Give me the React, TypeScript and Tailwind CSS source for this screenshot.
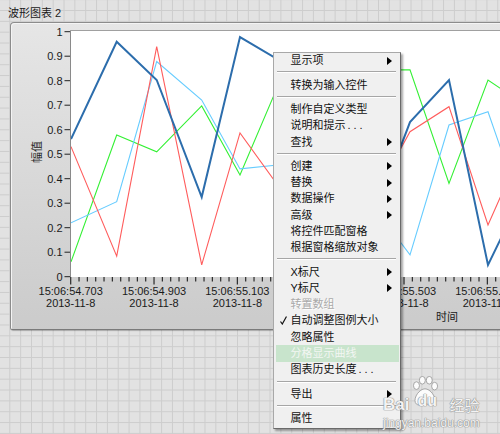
// LabVIEW 波形图表 + 右键菜单 (静态还原)
const FONT = "font-['Liberation_Sans','Noto_Sans_CJK_SC',sans-serif]";
const SVG_FONT = "'Liberation Sans','Noto Sans CJK SC',sans-serif";

// 数据点的横坐标(时间戳间隔不均)
const XS = [71, 116.7, 156.7, 201.7, 240, 282.5, 325, 367.5, 410, 449, 488, 530];
const y = (v: number) => 276.7 - v * 245;

const SERIES: { color: string; width: number; values: number[] }[] = [
  { color: "#33f033", width: 1.1, values: [0.061, 0.578, 0.51, 0.697, 0.415, 0.823, 0.9, 0.844, 0.844, 0.381, 0.803, 0.686] },
  { color: "#66ccff", width: 1.1, values: [0.22, 0.306, 0.878, 0.721, 0.44, 0.458, 0.3, 0.319, 0.089, 0.619, 0.673, 0.18] },
  { color: "#ff5c5c", width: 1.1, values: [0.531, 0.084, 0.939, 0.048, 0.587, 0.346, 0.6, 0.274, 0.592, 0.694, 0.211, 0.597] },
  { color: "#2c6dac", width: 2, values: [0.562, 0.959, 0.803, 0.325, 0.978, 0.876, 0.5, 0.174, 0.631, 0.803, 0.048, 0.4] },
];

// 55.303 那一格被菜单完全挡住,不画
const TIMES: [number, string][] = [
  [0, "15:06:54.703"],
  [1, "15:06:54.903"],
  [2, "15:06:55.103"],
  [4, "15:06:55.503"],
  [5, "15:06:55.703"],
];

type Item = { label: string; arrow?: boolean; disabled?: boolean; checked?: boolean; hover?: boolean; dots?: boolean } | null;

const MENU: Item[] = [
  { label: "显示项", arrow: true },
  null,
  { label: "转换为输入控件" },
  null,
  { label: "制作自定义类型" },
  { label: "说明和提示", dots: true },
  { label: "查找", arrow: true },
  null,
  { label: "创建", arrow: true },
  { label: "替换", arrow: true },
  { label: "数据操作", arrow: true },
  { label: "高级", arrow: true },
  { label: "将控件匹配窗格" },
  { label: "根据窗格缩放对象" },
  null,
  { label: "X标尺", arrow: true },
  { label: "Y标尺", arrow: true },
  { label: "转置数组", disabled: true },
  { label: "自动调整图例大小", checked: true },
  { label: "忽略属性" },
  { label: "分格显示曲线", hover: true },
  { label: "图表历史长度", dots: true },
  null,
  { label: "导出", arrow: true },
  null,
  { label: "属性" },
];

function Chart() {
  const ticks = Array.from({ length: 61 }, (_, i) => i);
  const yTicks = Array.from({ length: 11 }, (_, i) => i);
  return (
    <svg width={498} height={306} viewBox="11 23 498 306" className="block" fontFamily={SVG_FONT}>
      <defs>
        <clipPath id="plot">
          <rect x={71} y={31} width={440} height={246} />
        </clipPath>
      </defs>
      <rect x={70} y={30} width={441} height={247} fill="#fff" />
      <line x1={70.5} y1={30} x2={70.5} y2={277} stroke="#8a8a8a" />
      <line x1={70} y1={30.5} x2={511} y2={30.5} stroke="#a0a0a0" />

      {yTicks.map((i) => {
        const v = i / 10;
        return (
          <g key={i}>
            <line x1={64.5} y1={y(v)} x2={70} y2={y(v)} stroke="#222" />
            <text x={62.5} y={y(v)} textAnchor="end" dominantBaseline="central" fontSize="11" fill="#1a1a1a">
              {i === 10 ? "1" : i === 0 ? "0" : `0.${i}`}
            </text>
          </g>
        );
      })}

      {ticks.map((i) => {
        const x = 70.7 + i * 8.333;
        return <line key={i} x1={x} y1={277} x2={x} y2={i % 10 === 0 ? 284.5 : 281.5} stroke="#2a2a2a" strokeWidth="1.2" />;
      })}

      {TIMES.map(([k, t]) => {
        const x = 70.7 + k * 83.33;
        return (
          <g key={t} fontSize="11" fill="#1a1a1a" textAnchor="middle">
            <text x={x} y={290.5} dominantBaseline="central">{t}</text>
            <text x={x} y={302.5} dominantBaseline="central">2013-11-8</text>
          </g>
        );
      })}

      <text x={447} y={317} textAnchor="middle" dominantBaseline="central" fontSize="11" fill="#1a1a1a">时间</text>
      <text x={37} y={152} textAnchor="middle" dominantBaseline="central" fontSize="11" fill="#1a1a1a" transform="rotate(-90 37 152)">
        幅值
      </text>

      <g clipPath="url(#plot)">
        {SERIES.map((s) => (
          <polyline
            key={s.color}
            points={s.values.map((v, i) => `${XS[i]},${y(v).toFixed(1)}`).join(" ")}
            fill="none"
            stroke={s.color}
            strokeWidth={s.width}
          />
        ))}
      </g>
    </svg>
  );
}

function ContextMenu() {
  return (
    <div className="absolute left-[272.5px] top-[51.7px] w-[128px] border border-[#a8a8a8] border-r-[#6a6a6a] border-b-[#6a6a6a] bg-[#f0f0f0] pl-[2px] pr-[1px] pb-[1px] shadow-[2px_2px_2px_rgba(0,0,0,0.35)]">
      {MENU.map((it, i) =>
        it === null ? (
          <div key={i} className="h-[8px] pt-[2.5px] pl-[1px] pr-[2.5px]">
            <div className="h-px bg-[#a6a6a6]" />
            <div className="h-px bg-white" />
          </div>
        ) : (
          <div
            key={i}
            className={`flex h-[16.3px] items-center text-[11px] leading-none ${
              it.hover ? "bg-[#c8e4cc] text-[#f3f6f3]" : it.disabled ? "text-[#a9a9a9] [text-shadow:1px_1px_0_#fff]" : "text-[#111]"
            }`}
          >
            <div className="w-[15px] shrink-0 pl-[4px]">
              {it.checked && (
                <svg width="7" height="9" viewBox="0 0 7 9" className="block">
                  <path d="M0.5 5.5 L2.3 8 L6.5 0.5" fill="none" stroke="#111" strokeWidth="1.2" />
                </svg>
              )}
            </div>
            <span>
              {it.label}
              {it.dots && <span className="pl-[2px] tracking-[3px]">...</span>}
            </span>
            {it.arrow && (
              <svg width="5" height="8" viewBox="0 0 5 8" className="ml-auto mr-[7px] block">
                <path d="M0 0 L5 4 L0 8 Z" fill="#000" />
              </svg>
            )}
          </div>
        )
      )}
    </div>
  );
}

function Watermark() {
  return (
    <div className="absolute left-[383px] top-[389px] text-white/90 [text-shadow:0_0_1px_#8a8a8a,0_0_1px_#8a8a8a,0_0_1px_#8a8a8a]">
      <div className="flex items-end">
        <span className="text-[17px] font-bold leading-none">Bai</span>
        <div className="relative ml-[5px] w-[30px]">
          <svg width="28" height="32" viewBox="0 0 26 30" className="absolute left-[-3px] top-[-13px]">
            <g fill="#fff" fillOpacity="0.9" stroke="#9a9a9a" strokeWidth="0.8">
              <ellipse cx="5" cy="9" rx="2.8" ry="3.6" />
              <ellipse cx="10.5" cy="4" rx="2.8" ry="3.6" />
              <ellipse cx="17" cy="4" rx="2.8" ry="3.6" />
              <ellipse cx="22" cy="9.5" rx="2.8" ry="3.6" />
              <path d="M13 12 C18 12 24 20 22 25 C20 29 16 26 13 26 C10 26 6 29 4 25 C2 20 8 12 13 12 Z" />
            </g>
          </svg>
          <span className="relative pl-[3px] text-[16px] font-bold leading-none text-[#f4f4f4]">du</span>
        </div>
        <span className="ml-[5px] text-[15px] leading-none">经验</span>
      </div>
      <div className="mt-[4px] text-[12px] leading-none">jingyan.baidu.com</div>
    </div>
  );
}

export default function App() {
  return (
    <div
      className={`relative h-[434px] w-[500px] overflow-hidden bg-[#e2e2e2] bg-[linear-gradient(to_right,#cdcdcd_1px,transparent_1px),linear-gradient(to_bottom,#cdcdcd_1px,transparent_1px)] [background-size:10.85px_10.85px] [background-position:9.3px_10px] ${FONT}`}
    >
      <div className="h-[22px] pl-[8px] pt-[7px] text-[11px] leading-[12px] text-[#1a1a1a]">波形图表 2</div>
      <div className="ml-[10px] h-[308px] w-[500px] rounded-tl-[4px] rounded-bl-[2px] border border-[#8c8c8c] border-b-[#7a7a7a] bg-linear-to-b from-[#e6e6e6] to-[#cbcbcb] shadow-[inset_1px_1px_0_#f4f4f4,1px_1px_1px_rgba(0,0,0,0.25)]">
        <Chart />
      </div>
      <ContextMenu />
      <Watermark />
    </div>
  );
}
